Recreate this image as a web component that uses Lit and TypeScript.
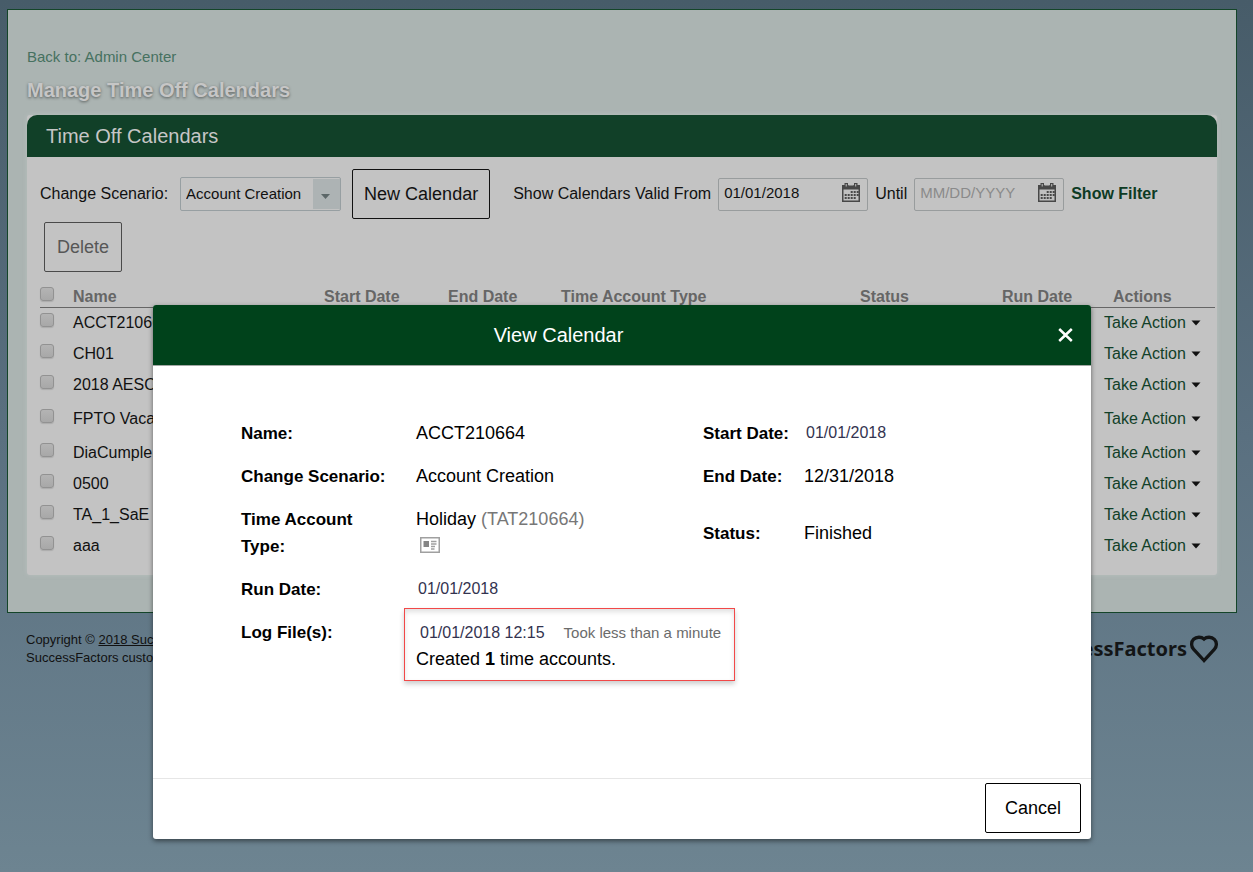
import { LitElement, html, css, svg } from "lit";
import { customElement, property } from "lit/decorators.js";
import { classMap } from "lit/directives/class-map.js";

interface CalendarRow {
  name: string;
  tall?: boolean;
}

const ROWS: CalendarRow[] = [
  { name: "ACCT210664" },
  { name: "CH01" },
  { name: "2018 AESO", tall: true },
  { name: "FPTO Vacation", tall: true },
  { name: "DiaCumple" },
  { name: "0500" },
  { name: "TA_1_SaE" },
  { name: "aaa" },
];

const calendarDots = [
  [9, 8], [12, 8], [15, 8],
  [6, 11], [9, 11], [12, 11], [15, 11],
  [3, 11], [3, 14], [6, 14], [9, 14], [12, 14],
];

/** Text box with a calendar button at its right end. */
@customElement("date-field")
export class DateField extends LitElement {
  @property() value = "";
  @property() label = "";

  static styles = css`
    :host {
      display: block;
    }
    .field {
      box-sizing: border-box;
      display: flex;
      align-items: center;
      width: 150px;
      height: 33px;
      padding: 0 7px 2px 5px;
      border: 1px solid #989c9d;
      border-radius: 2px;
    }
    .input {
      flex: 1;
      min-width: 0;
      padding: 0;
      border: 0;
      outline: 0;
      background: none;
      color: #111;
      font: 15px/20px "Liberation Sans", Arial, sans-serif;
    }
    .input::placeholder {
      color: #8a8a8a;
      opacity: 1;
    }
    .pick {
      display: block;
      padding: 0;
      border: 0;
      background: none;
    }
    .icon {
      display: block;
    }
  `;

  render() {
    return html`
      <div class="field">
        <input class="input" type="text" aria-label=${this.label} placeholder="MM/DD/YYYY" .value=${this.value} />
        <button class="pick" type="button" aria-label="Choose date">
          <svg class="icon" width="18" height="20" viewBox="0 0 18 20">
            <path d="M0 2h18v17H0z" fill="#484848" />
            <path d="M1.500 6.500h15v11h-15z" fill="#c0c0c0" />
            <path d="M2.500 0h3.500v4.500H2.500zM12 0h3.500v4.500H12z" fill="#484848" />
            <path d="M3.700 1h1v2.500h-1zM13.200 1h1v2.500h-1zM6.500 1.500h5v1h-5z" fill="#c0c0c0" />
            ${calendarDots.map(([x, y]) => svg`<rect x=${x - 0.3} y=${y} width="2" height="2" fill="#484848" />`)}
          </svg>
        </button>
      </div>
    `;
  }
}

/** Modal with the details of one calendar. */
@customElement("calendar-dialog")
export class CalendarDialog extends LitElement {
  static styles = css`
    :host {
      display: block;
      width: 100%;
      max-width: 938px;
      font-family: "Liberation Sans", Arial, sans-serif;
    }
    .dialog {
      overflow: hidden;
      border-radius: 3px;
      background: #fff;
      color: #000;
      box-shadow: 0 2px 5px rgba(0, 0, 0, 0.5);
    }
    .head {
      display: grid;
      grid-template-columns: 1fr 127px;
      align-items: center;
      height: 60px;
      padding: 0 18px;
      border-bottom: 1px solid #a3a8a5;
      background: #00421b;
      color: #fff;
    }
    .title {
      margin: 0;
      text-align: center;
      font-size: 20px;
      font-weight: 400;
      line-height: 24px;
    }
    .close {
      justify-self: end;
      padding: 0;
      border: 0;
      background: none;
    }
    .close-icon,
    .card-icon {
      display: block;
    }
    .body {
      display: grid;
      grid-template-columns: 175px 287px 101px auto;
      justify-content: start;
      row-gap: 16px;
      box-sizing: border-box;
      min-height: 412px;
      align-content: start;
      padding: 54px 20px 20px 88px;
      font-size: 18px;
      line-height: 27px;
      margin: 0;
    }
    .term {
      font-size: 17px;
      font-weight: 700;
    }
    .narrow {
      padding-right: 40px;
    }
    .middle {
      align-self: center;
    }
    .value {
      margin: 0;
    }
    .date {
      padding-left: 2px;
      color: #33334f;
      font-size: 16px;
      line-height: 26px;
    }
    .code {
      color: #777;
    }
    .card {
      display: block;
      margin: 4px 0 0 4px;
      padding: 0;
      border: 0;
      background: none;
    }
    .log {
      grid-column: 2 / -1;
      justify-self: start;
      margin: -11px 0 0 -12px;
      padding: 10px 13px 7px 11px;
      border: 1px solid #f24848;
      box-shadow: 0 3px 5px rgba(0, 0, 0, 0.2), inset 0 3px 5px rgba(0, 0, 0, 0.12);
    }
    .log-line {
      display: flex;
      gap: 19px;
      padding-left: 4px;
      color: #33334f;
      font-size: 16px;
    }
    .took {
      color: #6b6b6b;
      font-size: 15px;
    }
    .foot {
      display: flex;
      justify-content: flex-end;
      padding: 4px 10px 6px;
      border-top: 1px solid #e6e6e6;
    }
    .cancel {
      height: 50px;
      padding: 0 19px;
      border: 1px solid #000;
      border-radius: 2px;
      background: #fff;
      color: #000;
      font: 18px/24px "Liberation Sans", Arial, sans-serif;
    }
  `;

  render() {
    return html`
      <section class="dialog" role="dialog" aria-labelledby="dialog-title">
        <header class="head">
          <h2 class="title" id="dialog-title">View Calendar</h2>
          <button class="close" type="button" aria-label="Close">
            <svg class="close-icon" width="15" height="14" viewBox="0 0 15 14">
              <path d="M1.200 1l12.600 12M13.800 1L1.200 13" stroke="#fff" stroke-width="2.500" />
            </svg>
          </button>
        </header>
        <dl class="body">
          <dt class="term">Name:</dt>
          <dd class="value">ACCT210664</dd>
          <dt class="term">Start Date:</dt>
          <dd class="value date">01/01/2018</dd>

          <dt class="term">Change Scenario:</dt>
          <dd class="value">Account Creation</dd>
          <dt class="term">End Date:</dt>
          <dd class="value">12/31/2018</dd>

          <dt class="term narrow">Time Account Type:</dt>
          <dd class="value">
            Holiday <span class="code">(TAT210664)</span>
            <button class="card" type="button" aria-label="Time account type details">
              <svg class="card-icon" width="20" height="16" viewBox="0 0 20 16">
                <path d="M.750.750h18.500v14.500H.750z" fill="#fff" stroke="#a0a0a0" stroke-width="1.500" />
                <path d="M3.500 4h5.500v6H3.500z" fill="#858585" />
                <path d="M11 4.500h5.500M11 7h5.500M11 9.500h4M11 12h3.500" stroke="#a0a0a0" stroke-width="1.300" />
              </svg>
            </button>
          </dd>
          <dt class="term middle">Status:</dt>
          <dd class="value middle">Finished</dd>

          <dt class="term">Run Date:</dt>
          <dd class="value date">01/01/2018</dd>
          <dt></dt>
          <dd class="value"></dd>

          <dt class="term">Log File(s):</dt>
          <dd class="log">
            <div class="log-line"><span>01/01/2018 12:15</span><span class="took">Took less than a minute</span></div>
            <div>Created <b>1</b> time accounts.</div>
          </dd>
        </dl>
        <footer class="foot">
          <button class="cancel" type="button">Cancel</button>
        </footer>
      </section>
    `;
  }
}

@customElement("app-root")
export class AppRoot extends LitElement {
  static styles = css`
    :host {
      display: block;
      position: relative;
      box-sizing: border-box;
      min-height: 100vh;
      padding: 9px 16px 20px 7px;
      background: linear-gradient(#475c69, #5a7080 50%, #6d8491);
      color: #111;
      font: 16px/20px "Liberation Sans", Arial, sans-serif;
    }
    .page {
      padding: 38px 19px 37px;
      border: 1px solid #144529;
      background: #abb4b2;
    }
    .back {
      display: block;
      width: fit-content;
      color: #467160;
      font-size: 15px;
      line-height: 18px;
      text-decoration: none;
    }
    .heading {
      margin: 12px 0 13px;
      color: #c6c6c6;
      font-size: 20px;
      line-height: 24px;
      text-shadow: 0 1px 3px rgba(0, 0, 0, 0.5);
    }
    .panel {
      background: #c3c3c3;
      border-radius: 3px;
      box-shadow: 0 0 4px #b9bfbe;
    }
    .panel-title {
      margin: 0;
      padding: 9px 19px;
      border-radius: 10px 10px 0 0;
      background: #114028;
      color: #c6c6c6;
      font-size: 20px;
      font-weight: 400;
      line-height: 24px;
    }
    .panel-body {
      padding: 12px 2px 13px 13px;
    }
    .tools {
      display: flex;
      flex-wrap: wrap;
      align-items: center;
      gap: 3px 7px;
    }
    .scenario {
      display: flex;
      align-items: center;
      gap: 12px;
    }
    .pick {
      display: grid;
      width: 161px;
    }
    .select {
      grid-area: 1 / 1;
      height: 34px;
      padding: 0 30px 0 5px;
      border: 1px solid #979fa2;
      border-radius: 2px;
      outline: 0;
      appearance: none;
      background: linear-gradient(#adb3b4, #adb3b4) right 0 top 1px / 27px 30px no-repeat;
      color: #111;
      font: 15px/20px "Liberation Sans", Arial, sans-serif;
    }
    .select-arrow {
      grid-area: 1 / 1;
      place-self: center end;
      margin: 5px 11px 0 0;
      pointer-events: none;
    }
    .button {
      box-sizing: border-box;
      height: 50px;
      padding: 0 12px;
      border: 1px solid #111;
      border-radius: 2px;
      background: none;
      color: #111;
      font: 18px/24px "Liberation Sans", Arial, sans-serif;
    }
    .new {
      margin: 0 16px 0 4px;
      padding: 0 11px;
    }
    .bulk {
      display: flex;
      flex-basis: 100%;
      padding-left: 4px;
    }
    .faded {
      border-color: #4a4a4a;
      color: #575757;
    }
    .filter {
      color: #0d3b24;
      font-weight: 700;
      text-decoration: none;
    }
    .table {
      width: 100%;
      margin-top: 15px;
      border-collapse: collapse;
      table-layout: fixed;
    }
    .c-check { width: 33px; }
    .c-start { width: 124px; }
    .c-end { width: 113px; }
    .c-type { width: 299px; }
    .c-status { width: 142px; }
    .c-run { width: 101px; }
    .c-actions { width: 112px; }
    .th {
      height: 20px;
      padding: 0;
      border-bottom: 1px solid #666;
      color: #666;
      text-align: left;
      vertical-align: top;
      font-weight: 700;
      line-height: 20px;
    }
    .th-actions {
      padding-left: 10px;
    }
    .td {
      height: 31px;
      padding: 0;
      vertical-align: top;
      line-height: 30px;
      white-space: nowrap;
    }
    .tall .td {
      height: 34px;
    }
    .box {
      display: block;
      box-sizing: border-box;
      width: 14px;
      height: 14px;
      margin: 0;
      border: 1px solid #929292;
      border-radius: 3px;
      appearance: none;
      background: linear-gradient(#b4b4b4, #a8a8a8);
      box-shadow: 0 1px 1px rgba(0, 0, 0, 0.12);
    }
    .td .box {
      margin-top: 5px;
    }
    .action {
      padding: 0 0 0 1px;
      border: 0;
      background: none;
      color: #114028;
      font: 16px/30px "Liberation Sans", Arial, sans-serif;
    }
    .caret {
      margin-left: 5px;
      vertical-align: 2px;
    }
    .foot {
      display: flex;
      justify-content: space-between;
      padding: 18px 19px 0;
      font-size: 13px;
      line-height: 18px;
    }
    .legal {
      margin: 0;
    }
    .legal-link {
      color: inherit;
    }
    .brand {
      display: flex;
      align-items: center;
      gap: 3px;
      height: 36px;
      color: #131516;
      font: 700 20px/36px "Noto Sans", sans-serif;
    }
    .backdrop {
      position: absolute;
      inset: 0;
      display: flex;
      align-items: flex-start;
      justify-content: center;
      padding: 305px 9px 20px 0;
    }
  `;

  private renderRow(row: CalendarRow) {
    return html`
      <tr class=${classMap({ tall: !!row.tall })}>
        <td class="td"><input class="box" type="checkbox" aria-label=${row.name} /></td>
        <td class="td">${row.name}</td>
        <td class="td" colspan="5"></td>
        <td class="td">
          <button class="action" type="button">Take Action<svg class="caret" width="10" height="6" viewBox="0 0 10 6"><path d="M.500.500h9L5 5.500z" fill="#111" /></svg></button>
        </td>
      </tr>
    `;
  }

  render() {
    return html`
      <main class="page">
        <a class="back" href="#">Back to: Admin Center</a>
        <h1 class="heading">Manage Time Off Calendars</h1>
        <section class="panel">
          <h2 class="panel-title">Time Off Calendars</h2>
          <div class="panel-body">
            <div class="tools">
              <div class="scenario">
                <label for="scenario">Change Scenario:</label>
                <div class="pick">
                  <select class="select" id="scenario">
                    <option>Account Creation</option>
                  </select>
                  <svg class="select-arrow" width="9" height="5" viewBox="0 0 9 5"><path d="M0 0h9L4.500 5z" fill="#5c6768" /></svg>
                </div>
              </div>
              <button class="button new" type="button">New Calendar</button>
              <span>Show Calendars Valid From</span>
              <date-field label="Show Calendars Valid From" value="01/01/2018"></date-field>
              <span>Until</span>
              <date-field label="Until"></date-field>
              <a class="filter" href="#">Show Filter</a>
              <div class="bulk">
                <button class="button faded" type="button">Delete</button>
              </div>
            </div>
            <table class="table">
              <colgroup>
                <col class="c-check" />
                <col />
                <col class="c-start" />
                <col class="c-end" />
                <col class="c-type" />
                <col class="c-status" />
                <col class="c-run" />
                <col class="c-actions" />
              </colgroup>
              <thead>
                <tr>
                  <th class="th"><input class="box" type="checkbox" aria-label="Select all" /></th>
                  <th class="th">Name</th>
                  <th class="th">Start Date</th>
                  <th class="th">End Date</th>
                  <th class="th">Time Account Type</th>
                  <th class="th">Status</th>
                  <th class="th">Run Date</th>
                  <th class="th th-actions">Actions</th>
                </tr>
              </thead>
              <tbody>
                ${ROWS.map((row) => this.renderRow(row))}
              </tbody>
            </table>
          </div>
        </section>
      </main>
      <footer class="foot">
        <p class="legal">
          Copyright © <a class="legal-link" href="#">2018 SuccessFactors</a><br />
          SuccessFactors customer
        </p>
        <div class="brand">
          <span>SuccessFactors</span>
          <svg width="28" height="28" viewBox="0 0 28 28">
            <path d="M14 25.500L3.500 14.200C1 11.500 1 6.800 3.600 4.300C6.500 1.400 11.500 1.800 14 4C16.500 1.800 21.500 1.400 24.400 4.300C27 6.800 27 11.500 24.500 14.200Z" fill="none" stroke="#131516" stroke-width="3.300" />
          </svg>
        </div>
      </footer>
      <div class="backdrop"><calendar-dialog></calendar-dialog></div>
    `;
  }
}
